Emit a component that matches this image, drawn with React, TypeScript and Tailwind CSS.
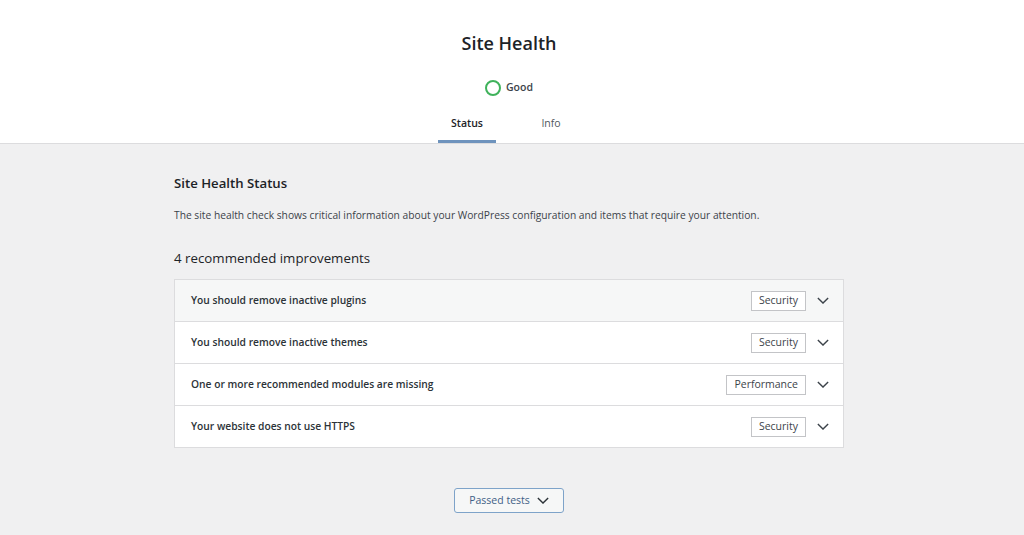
const issues = [
  { title: "You should remove inactive plugins", badge: "Security", hover: true },
  { title: "You should remove inactive themes", badge: "Security" },
  { title: "One or more recommended modules are missing", badge: "Performance" },
  { title: "Your website does not use HTTPS", badge: "Security" },
];

function Chevron({ className }: { className?: string }) {
  return (
    <svg viewBox="0 0 14 8" className={className} fill="none" stroke="currentColor" strokeWidth={1.6}>
      <polyline points="1,1 7,7 13,1" />
    </svg>
  );
}

export default function App() {
  return (
    <div
      className="min-h-[535px] bg-[#f0f0f1] text-[#1d2327] pr-[6px]"
      style={{ fontFamily: '"Open Sans", "Noto Sans", sans-serif' }}
    >
      <header className="bg-white border-b border-[#dcdcde] -mr-[6px] pr-[6px]">
        <div className="flex flex-col items-center pt-[29px]">
          <h1 className="text-[18px] leading-[28px] font-semibold text-[#1d2327]">Site Health</h1>
          <div className="flex items-center gap-[5px] mt-[22px] h-[18px]">
            <span className="w-[16px] h-[16px] rounded-full border-2 border-[#3fb25b]" />
            <span className="text-[10.5px] font-semibold text-[#3c434a]">Good</span>
          </div>
          <nav className="flex mt-[16px] pl-[26px]">
            <div className="w-[58px] flex flex-col items-center">
              <span className="text-[10.5px] font-semibold text-[#1d2327] leading-[14px] mt-[3px]">Status</span>
              <span className="block w-full h-[3px] bg-[#6e93bd] mt-[10px]" />
            </div>
            <div className="w-[110px] flex justify-center">
              <span className="text-[10.5px] text-[#50575e] leading-[14px] mt-[3px]">Info</span>
            </div>
          </nav>
        </div>
      </header>

      <main className="w-[670px] mx-auto pt-[30px]">
        <h2 className="text-[13.2px] leading-[18px] font-semibold text-[#1d2327]">Site Health Status</h2>
        <p className="text-[10.25px] leading-[14px] text-[#3c434a] mt-[16px]">
          The site health check shows critical information about your WordPress configuration and items that require your attention.
        </p>
        <h3 className="text-[13.3px] leading-[18px] text-[#1d2327] mt-[27px]">4 recommended improvements</h3>

        <div className="mt-[12px] border border-[#dcdcde] bg-white">
          {issues.map((it, i) => (
            <div
              key={it.title}
              className={
                "flex items-center pl-[16px] pr-[14px] " +
                (i > 0 ? "h-[42px] border-t border-[#dcdcde] " : "h-[41px] ") +
                (it.hover ? "bg-[#f6f7f7]" : "bg-white")
              }
            >
              <span className="flex-1 text-[10.25px] font-semibold text-[#2c3338]">{it.title}</span>
              <span className="border border-[#c3c4c7] bg-white px-[7px] h-[20px] flex items-center text-[10.5px] text-[#3c434a]">
                {it.badge}
              </span>
              <Chevron className="ml-[11px] w-[12px] h-[7px] text-[#3c434a]" />
            </div>
          ))}
        </div>

        <div className="flex justify-center mt-[40px] pb-[20px]">
          <button className="flex items-center gap-[7px] h-[25px] w-[110px] justify-center rounded-[3px] border border-[#7ea3c9] bg-[#f6f7f7] text-[10.5px] text-[#3e6086]">
            Passed tests
            <Chevron className="w-[12px] h-[7px] text-[#2c3338]" />
          </button>
        </div>
      </main>
    </div>
  );
}
